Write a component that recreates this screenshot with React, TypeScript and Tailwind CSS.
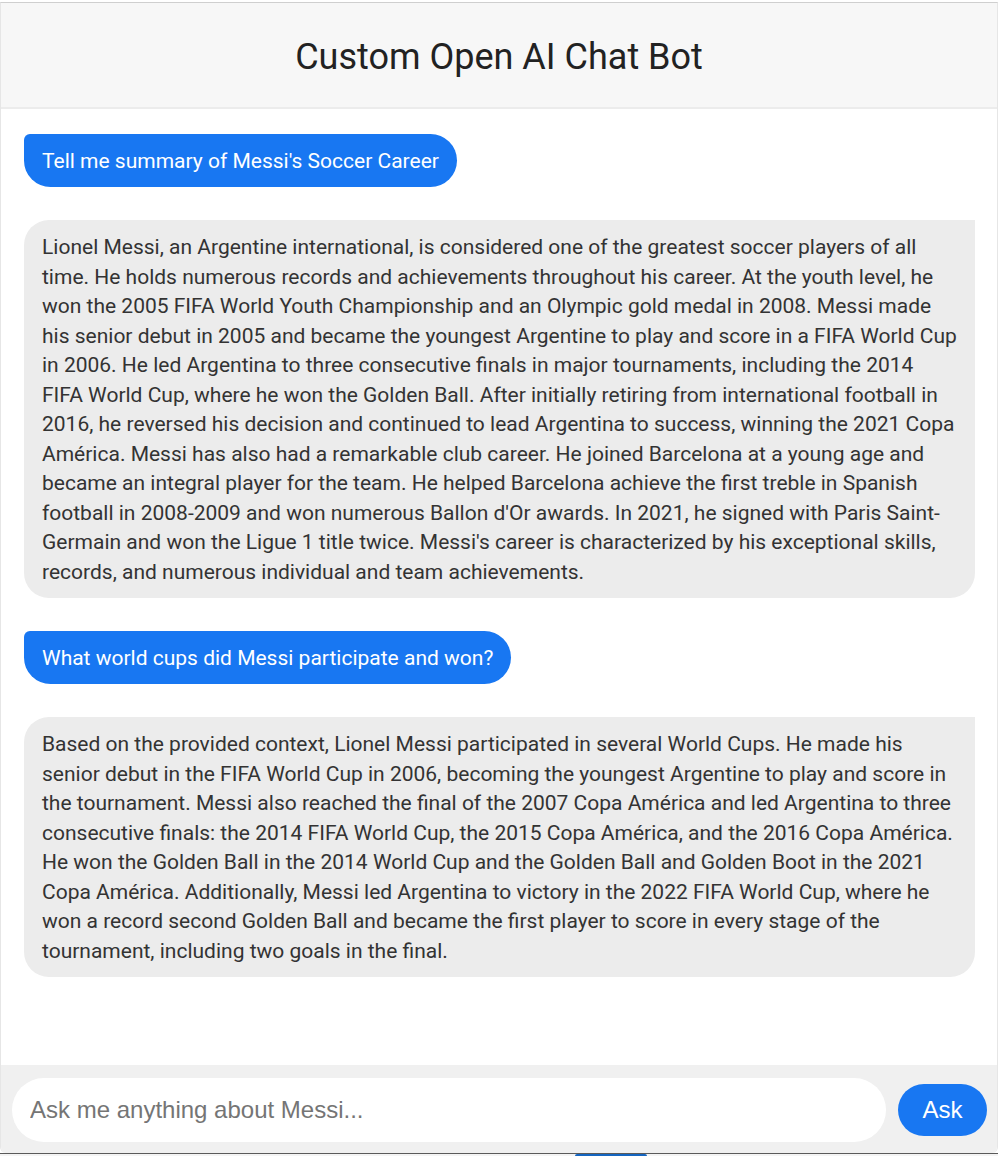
const answerOne =
  "Lionel Messi, an Argentine international, is considered one of the greatest soccer players of all time. He holds numerous records and achievements throughout his career. At the youth level, he won the 2005 FIFA World Youth Championship and an Olympic gold medal in 2008. Messi made his senior debut in 2005 and became the youngest Argentine to play and score in a FIFA World Cup in 2006. He led Argentina to three consecutive finals in major tournaments, including the 2014 FIFA World Cup, where he won the Golden Ball. After initially retiring from international football in 2016, he reversed his decision and continued to lead Argentina to success, winning the 2021 Copa América. Messi has also had a remarkable club career. He joined Barcelona at a young age and became an integral player for the team. He helped Barcelona achieve the first treble in Spanish football in 2008-2009 and won numerous Ballon d'Or awards. In 2021, he signed with Paris Saint-Germain and won the Ligue 1 title twice. Messi's career is characterized by his exceptional skills, records, and numerous individual and team achievements.";

const answerTwo =
  "Based on the provided context, Lionel Messi participated in several World Cups. He made his senior debut in the FIFA World Cup in 2006, becoming the youngest Argentine to play and score in the tournament. Messi also reached the final of the 2007 Copa América and led Argentina to three consecutive finals: the 2014 FIFA World Cup, the 2015 Copa América, and the 2016 Copa América. He won the Golden Ball in the 2014 World Cup and the Golden Ball and Golden Boot in the 2021 Copa América. Additionally, Messi led Argentina to victory in the 2022 FIFA World Cup, where he won a record second Golden Ball and became the first player to score in every stage of the tournament, including two goals in the final.";

const messages = [
  { role: "user", text: "Tell me summary of Messi's Soccer Career" },
  { role: "bot", text: answerOne },
  { role: "user", text: "What world cups did Messi participate and won?" },
  { role: "bot", text: answerTwo },
];

function Bubble({ role, text }: { role: string; text: string }) {
  if (role === "user") {
    return (
      <div className="flex">
        <div className="bg-[#1877f2] text-white text-[21px] leading-[29px] px-[18px] pt-[13px] pb-[11px] rounded-[27px] rounded-tl-[6px]">
          {text}
        </div>
      </div>
    );
  }
  return (
    <div className="bg-[#ececec] text-[#333] text-[21px] leading-[29.5px] px-[18px] pt-[13px] pb-[11px] rounded-[25px] rounded-tr-none">
      {text}
    </div>
  );
}

export default function App() {
  return (
    <div className="h-[1156px] w-full bg-white flex flex-col pt-[2px] font-['Roboto',sans-serif]">
      <div className="flex-1 flex flex-col border-t border-[#cfcfcf] border-x border-x-[#e6e6e6] rounded-b-[6px] overflow-hidden">
        <header className="h-[106px] shrink-0 bg-[#f7f7f7] border-b-2 border-[#ececec] flex items-center justify-center pt-[3px]">
          <h1 className="text-[36px] text-[#222] font-normal">Custom Open AI Chat Bot</h1>
        </header>
        <div className="flex-1 flex flex-col gap-[33px] pt-[25px] pl-[23px] pr-[22px]">
          {messages.map((m, i) => (
            <Bubble key={i} role={m.role} text={m.text} />
          ))}
        </div>
        <div className="h-[88px] shrink-0 bg-[#f0f0f0] flex items-center gap-[12px] pl-[11px] pr-[10px] pt-[2px]">
          <div className="flex-1 h-[64px] bg-white rounded-[32px] flex items-center px-[18px]">
            <input
              className="w-full outline-none bg-transparent text-[24px] text-[#222] placeholder:text-[#757575] font-['Liberation_Sans',Arial,sans-serif]"
              placeholder="Ask me anything about Messi..."
            />
          </div>
          <button
            type="button"
            className="w-[89px] h-[52px] rounded-[26px] bg-[#1877f2] text-white text-[24px] font-['Liberation_Sans',Arial,sans-serif]"
          >
            Ask
          </button>
        </div>
      </div>
      <div className="h-[3px] shrink-0 border-t border-[#5a5a5a] bg-[#f4f4f4] flex">
        <div className="ml-[575px] w-[72px] h-[2px] bg-[#1565c0] rounded-t-[4px]" />
      </div>
    </div>
  );
}
